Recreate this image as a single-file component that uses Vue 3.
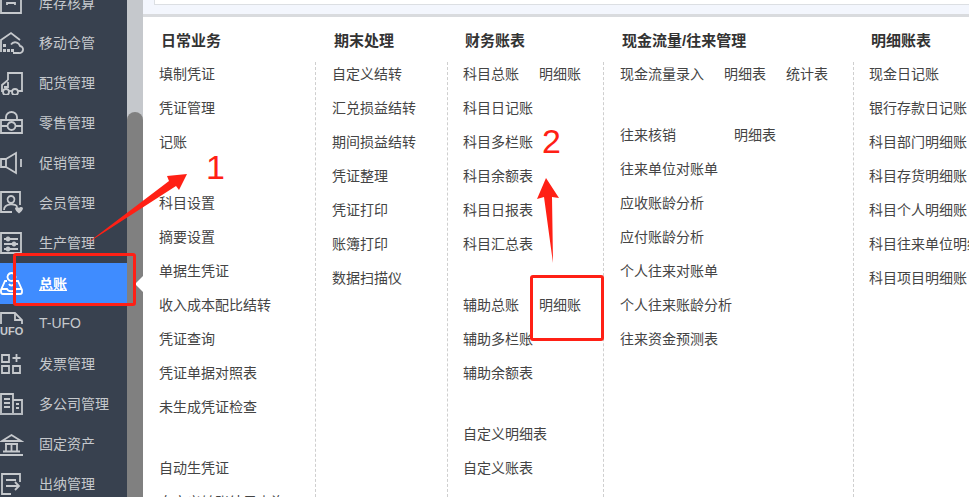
<script setup>
const menu = [
  { name: '库存核算', paths: ['M1 3h20v19H1zM1 7h20', 'M7 14v-2h8v2'] },
  { name: '移动仓管', paths: ['M1 21V9l10-7 9 7', 'M13 22h6a3.500 3.500 0 0 0 1-7 5 5 0 0 0-9-1.500'], dots: 'M3 13h3v3H3zM3 18h3v3H3zM7 18h3v3H7zM11 18h3v3h-3z' },
  { name: '配货管理', paths: ['M8 9V2h14v18h-5', 'M8 9L2 14v6h1', 'M8 11v5H4', 'M9 20h3', 'M3 21a3 3 0 0 0 6 0a3 3 0 0 0-6 0zM12 21a3 3 0 0 0 6 0a3 3 0 0 0-6 0z'] },
  { name: '零售管理', paths: ['M1 9h21v13H1z', 'M6 9V6a5.500 5 0 0 1 11 0v3', 'M11.500 11a4 4 0 1 0 .01 0z', 'M1 15h6M16 15h6'] },
  { name: '促销管理', paths: ['M1 8h5v8H1zM6 8l10-6v20L6 16', 'M21 8v8'] },
  { name: '会员管理', paths: ['M20 14V1H1v20h11', 'M11 5a3.500 3.500 0 1 0 .01 0zM4 19c0-7 13-7 13-3'], fill: 'M15 17c1-1.500 3-1.500 4 0c1-1.500 3-1.500 4 0c0 2-2 4-4 5.500c-2-1.500-4-3.500-4-5.500z' },
  { name: '生产管理', paths: ['M1 2h20v20H1z', 'M4 8h14M4 13h14M4 18h14', 'M8 6.500a1.500 1.500 0 1 0 .01 0zM14 11.500a1.500 1.500 0 1 0 .01 0zM8 16.500a1.500 1.500 0 1 0 .01 0z'] },
  { name: '总账', active: true, paths: ['M7 9H5L1 18v2a2 2 0 0 0 2 2h17a2 2 0 0 0 2-2v-2L18 9h-2', 'M1 17h6c1 3 8 3 9 0h6', 'M11.500 1a4 4 0 1 0 .01 0z', 'M9 12c1 2 4 2 5 0'] },
  { name: 'T-UFO', ufo: true, paths: ['M1 12V1h14l7 7v4', 'M15 1v7h7'] },
  { name: '发票管理', paths: ['M2 3h7v7H2zM2 14h7v7H2zM13 14h7v7h-7z', 'M16.500 2v8M12.500 6h8'] },
  { name: '多公司管理', paths: ['M1 21V2h12v19', 'M13 8h9v13', 'M0 22h23', 'M4 7h6M4 11h6M4 15h6M16 12h3M16 16h3'] },
  { name: '固定资产', paths: ['M2 9l9.500-6 9.500 6z', 'M5 12h13M6 13v6M11.500 13v6M17 13v6M3 19.500h17M0 23h23'] },
  { name: '出纳管理', paths: ['M20 10V2H2v20h9', 'M6 8h10M6 14h12M15 10l4 4-4 4'] }
]

const columns = [
  { title: '日常业务', width: 173, titleGap: 18, pad: 16, groups: [
    [['填制凭证'], ['凭证管理'], ['记账']],
    [['科目设置'], ['摘要设置'], ['单据生凭证'], ['收入成本配比结转'], ['凭证查询'], ['凭证单据对照表'], ['未生成凭证检查']],
    [['自动生凭证'], ['自定义转账结果查询']]
  ] },
  { title: '期末处理', width: 132, titleGap: 18, pad: 16, groups: [
    [['自定义结转'], ['汇兑损益结转'], ['期间损益结转'], ['凭证整理'], ['凭证打印'], ['账簿打印'], ['数据扫描仪']]
  ] },
  { title: '财务账表', width: 156, titleGap: 17, pad: 15, groups: [
    [['科目总账', '明细账'], ['科目日记账'], ['科目多栏账'], ['科目余额表'], ['科目日报表'], ['科目汇总表']],
    [['辅助总账', '明细账'], ['辅助多栏账'], ['辅助余额表']],
    [['自定义明细表'], ['自定义账表']]
  ] },
  { title: '现金流量/往来管理', width: 250, titleGap: 18, pad: 16, groups: [
    [['现金流量录入', '明细表', '统计表']],
    [['往来核销', '明细表'], ['往来单位对账单'], ['应收账龄分析'], ['应付账龄分析'], ['个人往来对账单'], ['个人往来账龄分析'], ['往来资金预测表']]
  ] },
  { title: '明细账表', width: 115, titleGap: 17, pad: 15, last: true, groups: [
    [['现金日记账'], ['银行存款日记账'], ['科目部门明细账'], ['科目存货明细账'], ['科目个人明细账'], ['科目往来单位明细账'], ['科目项目明细账']]
  ] }
]

const padStyle = (c) => ({ paddingLeft: c.pad + 'px' })
const titleStyle = (c) => ({ paddingLeft: c.titleGap + 'px', width: c.width + 'px' })
</script>

<template>
  <div class="page">
    <aside class="side">
      <ul class="menu">
        <li v-for="m in menu" :key="m.name" class="item" :class="{ active: m.active }">
          <svg class="icon" viewBox="0 0 24 24" width="24" height="24" fill="none" stroke="currentColor" stroke-width="1.8">
            <path v-for="p in m.paths" :key="p" :d="p" />
            <path v-if="m.fill" :d="m.fill" fill="currentColor" stroke="none" />
            <path v-if="m.dots" :d="m.dots" fill="currentColor" stroke="none" />
            <text v-if="m.ufo" x="0" y="23" class="ufo">UFO</text>
          </svg>
          <span class="label">{{ m.name }}</span>
          <i v-if="m.active" class="caret"></i>
        </li>
      </ul>
    </aside>
    <div class="track"><div class="thumb"></div></div>
    <main class="main">
      <header class="bar"><div class="field"></div></header>
      <section class="cols">
        <div v-for="c in columns" :key="c.title" class="col" :style="{ width: c.width + 'px' }">
          <h3 class="title" :style="titleStyle(c)">{{ c.title }}</h3>
          <div class="body" :class="{ last: c.last }" :style="padStyle(c)">
            <div v-for="(g, gi) in c.groups" :key="gi" class="group">
              <div v-for="(r, ri) in g" :key="ri" class="row" :class="{ wide: r[0] === '往来核销' }">
                <a v-for="t in r" :key="t" class="link">{{ t }}</a>
              </div>
            </div>
          </div>
        </div>
      </section>
    </main>

    <svg class="marks" width="969" height="497" viewBox="0 0 969 497">
      <path d="M86 244L169 181l-2-5 20-2-8 16-3-4z" fill="#ff2015" />
      <path d="M553 263L544 197l-7 2 9-21 13 20-7-1z" fill="#ff2015" />
    </svg>
    <div class="box box1"></div>
    <div class="box box2"></div>
    <span class="num num1">1</span>
    <span class="num num2">2</span>
  </div>
</template>

<style>
html, body { margin: 0; overflow: hidden; background: #fff; }
</style>

<style scoped>
.page {
  position: relative;
  display: flex;
  width: 969px;
  height: 497px;
  overflow: hidden;
  background: #fff;
  font-family: "Liberation Sans", "Noto Sans CJK SC", sans-serif;
}
.side { width: 127px; flex: none; background: #38414f; position: relative; z-index: 1; }
.menu { list-style: none; margin: -17px 0 0; padding: 0; }
.item {
  position: relative;
  display: flex;
  align-items: center;
  height: 40px;
  color: #c6c9cd;
  font-size: 14px;
}
.item.active { background: #3f8cff; color: #fff; font-weight: 700; height: 41px; }
.active .label { text-decoration: underline; }
.icon { flex: none; margin-right: 15px; display: block; }
.label { white-space: nowrap; margin-top: -2px; }
.ufo { font: 700 11px "Liberation Sans", sans-serif; fill: currentColor; stroke: none; }
.caret {
  position: absolute;
  right: -16px;
  top: 13px;
  border: 8px solid transparent;
  border-left-width: 0;
  border-right-color: #fff;
}
.track { width: 16px; flex: none; display: flex; flex-direction: column; background: #c5c8cc; padding-top: 112px; box-sizing: border-box; }
.thumb { flex: 1; background: #808080; border-radius: 8px 8px 0 0; }
.main { flex: 1; min-width: 0; display: flex; flex-direction: column; }
.bar { height: 14px; flex: none; background: #f3f6fd; border-bottom: 3px solid #d9dbde; padding-left: 11px; }
.field { height: 4px; background: #fff; border: 1px solid #dcdfe3; border-width: 0 0 1px 1px; }
.cols { flex: 1; display: flex; min-height: 0; }
.col { flex: none; display: flex; flex-direction: column; }
.title {
  margin: 0;
  flex: none;
  box-sizing: border-box;
  height: 45px;
  padding-top: 14px;
  font-size: 15px;
  line-height: 20px;
  font-weight: 700;
  color: #333;
  white-space: nowrap;
}
.body { flex: 1; min-height: 0; border-right: 1px dashed #cfcfcf; box-sizing: border-box; white-space: nowrap; }
.body.last { border-right: 0; }
.group { display: flow-root; }
.group + .group { margin-top: 27px; }
.row { display: flex; gap: 20px; height: 24px; margin-bottom: 10px; line-height: 24px; font-size: 14px; color: #444; }
.row.wide { gap: 58px; }
.marks { position: absolute; left: 0; top: 0; z-index: 2; pointer-events: none; }
.box { position: absolute; z-index: 2; box-sizing: border-box; border: 3px solid #ff2015; border-radius: 3px; }
.box1 { left: 13px; top: 253px; width: 123px; height: 53px; }
.box2 { left: 530px; top: 275px; width: 74px; height: 66px; }
.num { position: absolute; z-index: 2; color: #ff2015; font: 34px/36px "Liberation Sans", sans-serif; }
.num1 { left: 206px; top: 149px; }
.num2 { left: 542px; top: 123px; }
</style>
